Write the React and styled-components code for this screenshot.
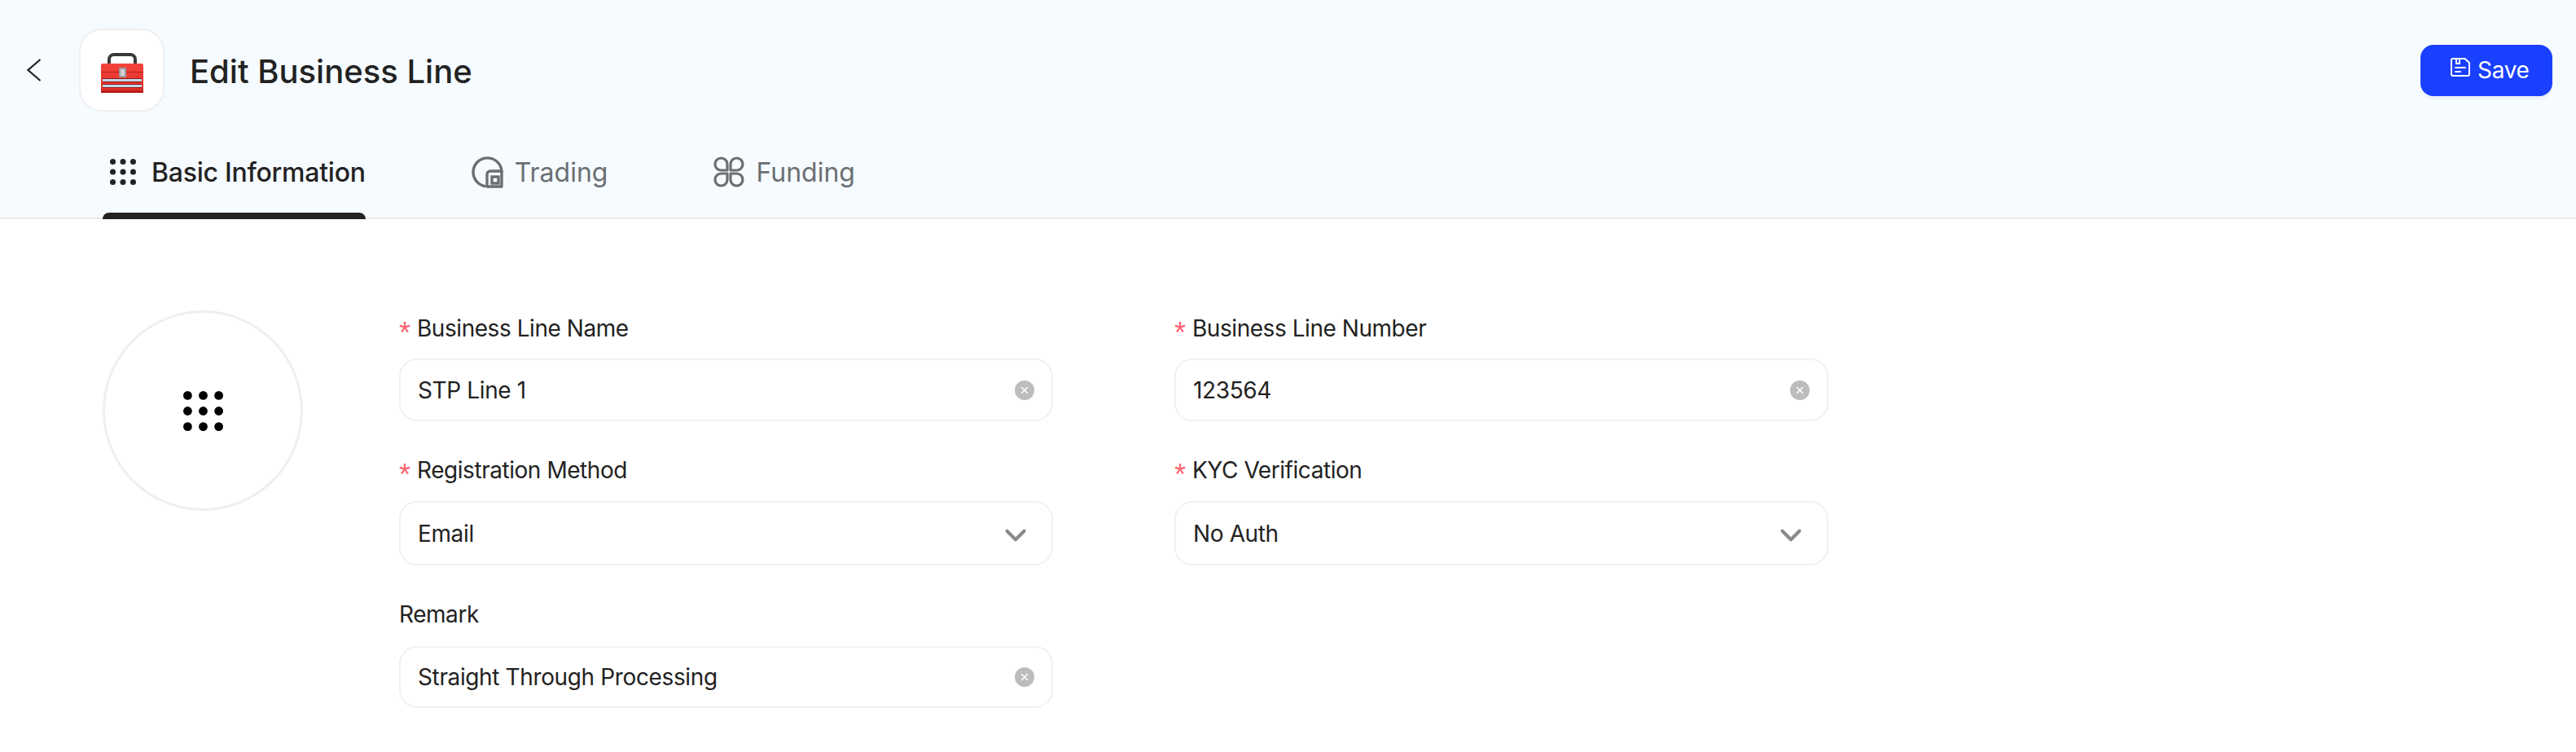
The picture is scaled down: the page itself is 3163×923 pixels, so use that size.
import React from 'react';
import styled, { createGlobalStyle } from 'styled-components';
import { X, ChevronDown } from 'lucide-react';

const GlobalStyle = createGlobalStyle`
  html, body {
    margin: 0;
    padding: 0;
    background: #fff;
    font-family: Inter, 'Liberation Sans', sans-serif;
  }
  * {
    box-sizing: border-box;
  }
`;

const Page = styled.div`
  width: 100%;
  min-height: 923px;
  background: #fff;
`;

const Header = styled.header`
  height: 269px;
  padding-top: 35px;
  background: #f6fbff;
  border-bottom: 2px solid #e8ebef;
`;

const TopRow = styled.div`
  display: flex;
  align-items: center;
  height: 102px;
  padding: 0 29px 0 33px;
`;

const BackButton = styled.button`
  display: flex;
  width: 18px;
  height: 28px;
  margin-right: 46px;
  padding: 0;
  border: 0;
  background: none;
`;

const AppIcon = styled.div`
  display: flex;
  align-items: center;
  justify-content: center;
  width: 105px;
  height: 102px;
  margin-right: 31px;
  background: #fff;
  border: 2px solid #eeeff1;
  border-radius: 28px;
`;

const Title = styled.h1`
  flex: 1;
  margin: 2px 0 0;
  font-size: 40px;
  font-weight: 500;
  color: #222;
`;

const SaveButton = styled.button`
  display: flex;
  align-items: center;
  gap: 9px;
  width: 162px;
  height: 63px;
  padding: 0 0 0 37px;
  border: 0;
  border-radius: 16px;
  background: #1a40ff;
  box-shadow: 0 4px 0 #eef2f7;
  font-family: inherit;
  font-size: 28px;
  letter-spacing: -0.3px;
  color: #fff;

  svg {
    margin-bottom: 8px;
  }
`;

const Tabs = styled.nav`
  display: flex;
  gap: 121px;
  margin-top: 54px;
  padding-left: 126px;
`;

const Tab = styled.div`
  display: flex;
  flex-direction: column;
`;

const TabLabel = styled.div`
  display: flex;
  align-items: center;
  gap: ${p => (p.$active ? '19px' : '14px')};
  height: 40px;
  padding-left: 9px;
  font-size: 32px;
  font-weight: ${p => (p.$active ? 500 : 400)};
  letter-spacing: ${p => (p.$active ? '-0.25px' : '0')};
  color: ${p => (p.$active ? '#222' : '#6b6f72')};
`;

const TabBar = styled.div`
  height: 8px;
  margin-top: 30px;
  border-radius: 8px 8px 0 0;
  background: ${p => (p.$active ? '#222' : 'transparent')};
`;

const Main = styled.main`
  display: flex;
  gap: 118px;
  padding: 112px 0 0 126px;
`;

const Avatar = styled.div`
  display: flex;
  flex: none;
  align-items: center;
  justify-content: center;
  width: 246px;
  height: 246px;
  border: 3px solid #efefef;
  border-radius: 50%;
`;

const FormGrid = styled.div`
  display: grid;
  grid-template-columns: 803px 803px;
  column-gap: 149px;
  row-gap: 38px;
`;

const Field = styled.div`
  display: flex;
  flex-direction: column;
`;

const Label = styled.label`
  display: flex;
  align-items: center;
  height: 44px;
  margin-bottom: ${p => p.$gap}px;
  font-size: 28px;
  letter-spacing: -0.45px;
  color: #222;
`;

const Star = styled.span`
  width: 22px;
  padding-top: 12px;
  font-family: 'Liberation Sans', sans-serif;
  font-size: 36px;
  line-height: 30px;
  color: #ff6270;
`;

const Control = styled.div`
  display: flex;
  align-items: center;
  justify-content: space-between;
  height: ${p => p.$height}px;
  padding: ${p => (p.$select ? '0 32px 0 21px' : '0 21px 0 21px')};
  border: 2px solid #f1f1f2;
  border-radius: 22px;
  font-size: 28px;
  letter-spacing: -0.37px;
  color: #222;
`;

const ClearButton = styled.span`
  display: flex;
  align-items: center;
  justify-content: center;
  width: 24px;
  height: 24px;
  border-radius: 50%;
  background: #bcbcbc;
  color: #fff;
`;

const ArrowBox = styled.span`
  display: flex;
  align-items: center;
  justify-content: center;
  width: 24px;
  height: 24px;
  margin-top: 4px;
  color: #8a8a8a;

  svg {
    flex: none;
  }
`;

const Dots = ({ size, color }) => {
  const c = [size * 0.11, size * 0.5, size * 0.89];
  return (
    <svg width={size} height={size} viewBox={`0 0 ${size} ${size}`}>
      {c.map(y =>
        c.map(x => <circle key={`${x}-${y}`} cx={x} cy={y} r={size * 0.11} fill={color} />)
      )}
    </svg>
  );
};

const Toolbox = () => (
  <svg width="58" height="56" viewBox="0 0 58 56">
    <defs>
      <linearGradient id="boxRed" x1="0" y1="0" x2="0" y2="1">
        <stop offset="0" stopColor="#f2443c" />
        <stop offset="1" stopColor="#e02c25" />
      </linearGradient>
    </defs>
    <path d="M13 21v-6a6 6 0 0 1 6-6h20a6 6 0 0 1 6 6v6" fill="none" stroke="#3a3a3c" strokeWidth="4" />
    <rect x="3" y="20" width="52" height="36" rx="2" fill="url(#boxRed)" />
    <rect x="3" y="30" width="52" height="1" fill="#b81c16" />
    <rect x="25" y="25" width="9" height="12" rx="1" fill="#9b9b9f" />
    <rect x="27" y="27" width="5" height="8" fill="#d0d0d2" />
    <rect x="5" y="38" width="48" height="5" fill="#8e1d18" />
    <rect x="5" y="39" width="48" height="3" fill="#c3d7ea" />
    <rect x="5" y="45" width="48" height="5" fill="#8e1d18" />
    <rect x="5" y="46" width="48" height="3" fill="#c3d7ea" />
    <rect x="3" y="53" width="52" height="3" rx="1" fill="#b81c16" />
  </svg>
);

const TradingIcon = () => (
  <svg width="39" height="39" viewBox="0 0 39 39" fill="none" stroke="#6b6f72" strokeWidth="3.4">
    <path d="M16 36.5A17.5 17.5 0 1 1 37 19" strokeLinecap="round" />
    <path d="M37 18H23a4 4 0 0 0-4 4v15h18z" strokeLinejoin="round" />
    <rect x="25" y="25" width="8" height="8" />
  </svg>
);

const FundingIcon = () => (
  <svg width="38" height="38" viewBox="0 0 38 38" fill="none" stroke="#6b6f72" strokeWidth="3.2" strokeLinejoin="round">
    <path d="M17 17H9.5A7.5 7.5 0 1 1 17 9.5Z" />
    <path d="M21 17h7.5A7.5 7.5 0 1 0 21 9.5Z" />
    <path d="M17 21H9.5A7.5 7.5 0 1 0 17 28.5Z" />
    <path d="M21 21h7.5A7.5 7.5 0 1 1 21 28.5Z" />
  </svg>
);

const SaveIcon = () => (
  <svg width="24" height="23" viewBox="0 0 24 23" fill="none" stroke="#fff" strokeWidth="2">
    <path d="M3 1h14.5L23 6v14a2 2 0 0 1-2 2H3a2 2 0 0 1-2-2V3a2 2 0 0 1 2-2z" strokeLinejoin="round" />
    <path d="M7 1v6h4V1" />
    <path d="M6 12h12M6 17h6" strokeLinecap="round" />
  </svg>
);

const BackIcon = () => (
  <svg width="18" height="28" viewBox="0 0 18 28" fill="none" stroke="#222" strokeWidth="2.2">
    <path d="M16.5 1 1.5 14l15 13" />
  </svg>
);

const tabs = [
  { name: 'Basic Information', active: true, icon: <Dots size={32} color="#222" /> },
  { name: 'Trading', icon: <TradingIcon /> },
  { name: 'Funding', icon: <FundingIcon /> }
];

const fields = [
  { label: 'Business Line Name', value: 'STP Line 1', required: true, gap: 15, height: 77 },
  { label: 'Business Line Number', value: '123564', required: true, gap: 15, height: 77 },
  { label: 'Registration Method', value: 'Email', required: true, select: true, gap: 16, height: 79 },
  { label: 'KYC Verification', value: 'No Auth', required: true, select: true, gap: 16, height: 79 },
  { label: 'Remark', value: 'Straight Through Processing', gap: 17, height: 76 }
];

const App = () => (
  <Page>
    <GlobalStyle />
    <Header>
      <TopRow>
        <BackButton>
          <BackIcon />
        </BackButton>
        <AppIcon>
          <Toolbox />
        </AppIcon>
        <Title>Edit Business Line</Title>
        <SaveButton>
          <SaveIcon />
          Save
        </SaveButton>
      </TopRow>
      <Tabs>
        {tabs.map(tab => (
          <Tab key={tab.name}>
            <TabLabel $active={tab.active}>
              {tab.icon}
              {tab.name}
            </TabLabel>
            <TabBar $active={tab.active} />
          </Tab>
        ))}
      </Tabs>
    </Header>
    <Main>
      <Avatar>
        <Dots size={49} color="#000" />
      </Avatar>
      <FormGrid>
        {fields.map(field => (
          <Field key={field.label}>
            <Label $gap={field.gap}>
              {field.required && <Star>*</Star>}
              {field.label}
            </Label>
            <Control $select={field.select} $height={field.height}>
              {field.value}
              {field.select ? (
                <ArrowBox>
                  <ChevronDown size={42} strokeWidth={2.4} />
                </ArrowBox>
              ) : (
                <ClearButton>
                  <X size={14} strokeWidth={2.5} />
                </ClearButton>
              )}
            </Control>
          </Field>
        ))}
      </FormGrid>
    </Main>
  </Page>
);

export default App;
